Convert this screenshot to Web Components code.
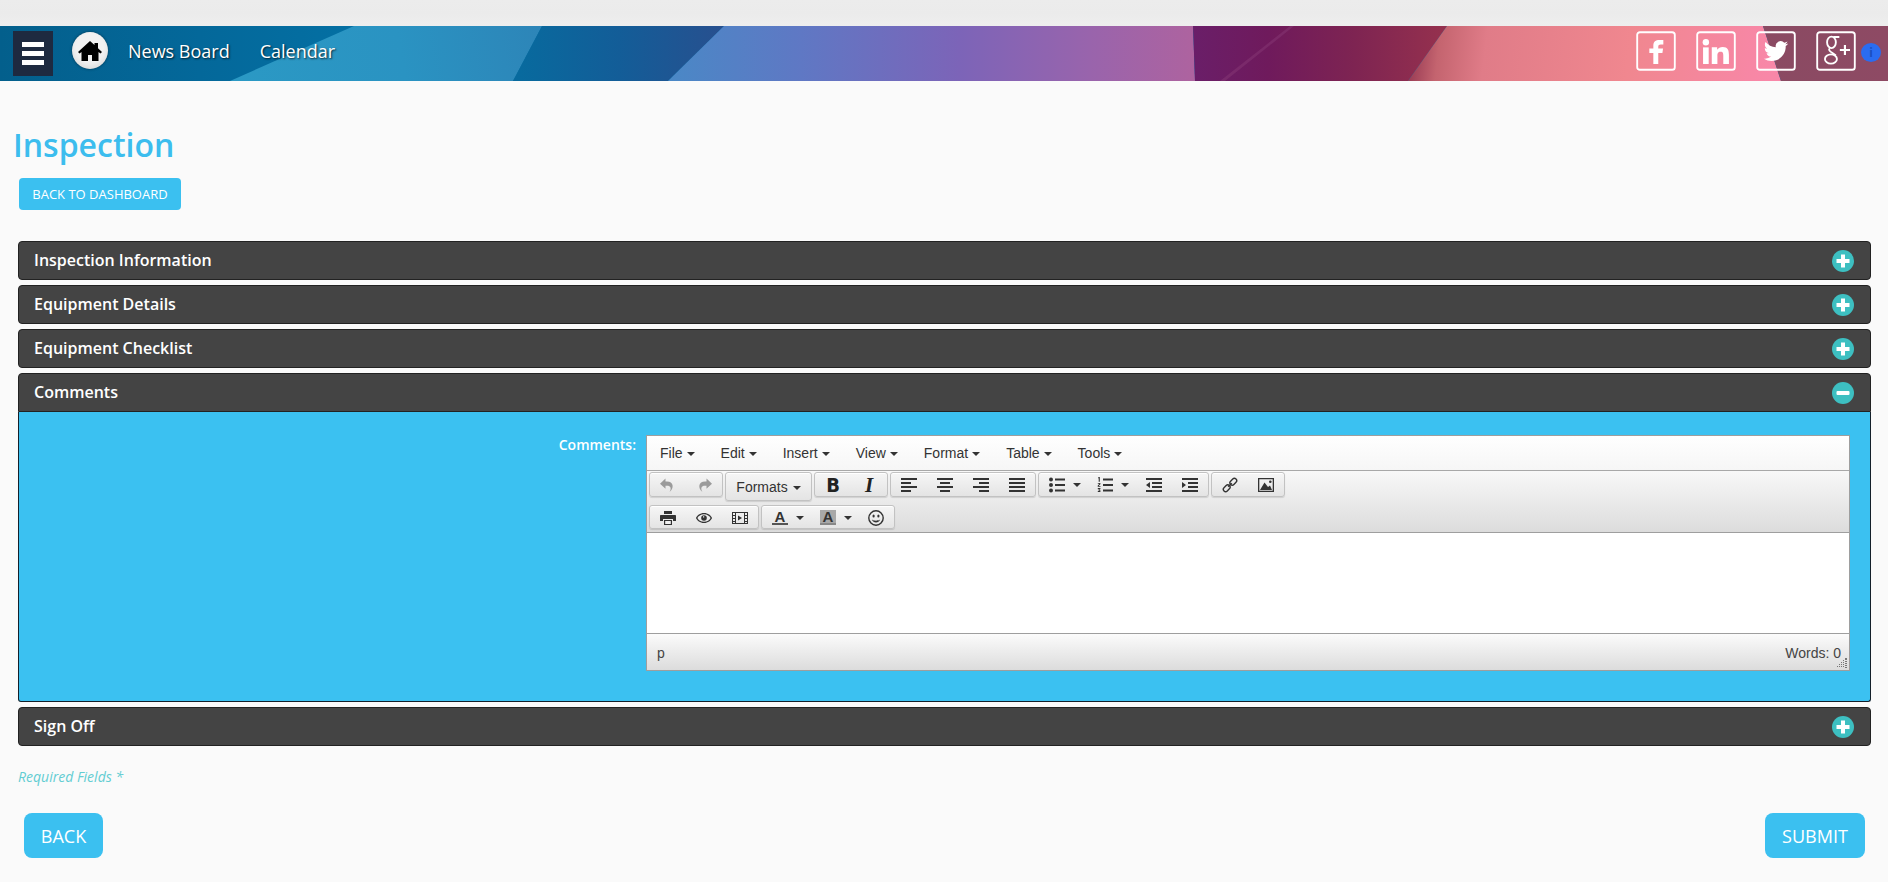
<!DOCTYPE html>
<html lang="en">
<head>
<meta charset="utf-8">
<title>Inspection</title>
<style>
html,body{margin:0;padding:0;background:#fafafa;font-family:"Open Sans",sans-serif;}
</style>
</head>
<body>
<app-shell>
  <site-header></site-header>
  <page-main>
    <page-title slot="title">Inspection</page-title>
    <blue-button slot="title" size="small" class="dash">BACK TO DASHBOARD</blue-button>
    <accordion-panel title="Inspection Information"></accordion-panel>
    <accordion-panel title="Equipment Details"></accordion-panel>
    <accordion-panel title="Equipment Checklist"></accordion-panel>
    <accordion-panel title="Comments" open>
      <comment-field label="Comments:"><rich-editor></rich-editor></comment-field>
    </accordion-panel>
    <accordion-panel title="Sign Off"></accordion-panel>
    <form-footer></form-footer>
  </page-main>
</app-shell>

<script>
function def(name, css, html, init){
  customElements.define(name, class extends HTMLElement{
    constructor(){
      super();
      const r=this.attachShadow({mode:'open'});
      r.innerHTML='<style>'+css+'</style>'+(typeof html==='function'?html(this):html);
    }
    connectedCallback(){ if(init&&!this._i){this._i=1;init(this);} }
  });
}

def('app-shell',`
:host{display:block;background:#fafafa;min-height:882px}
.top{height:26px;background:linear-gradient(#ececec,#ebebeb,#eeeeee)}
`,`<div class="top"></div><slot></slot>`);

const SOC={
 f:`<path fill="#fff" d="M13 24.750V16.500h-3v-3.300h3V11c0-3 1.800-4.250 4.500-4.250h3v3.400h-2c-1.200 0-1.800.5-1.800 1.600v1.450h3.600l-.5 3.300h-3.100v8.250z"/>`,
 in:`<g fill="#fff" transform="translate(2.800 4.600) scale(.96)"><circle cx="4.8" cy="4" r="2.5"/><rect x="2.6" y="8" width="4.4" height="13"/><path d="M9.4 8h4.2v1.900c.8-1.300 2.400-2.200 4.400-2.200 4 0 4.800 2.600 4.800 6.100V21h-4.400v-6.400c0-1.500 0-3.200-2.100-3.200s-2.500 1.600-2.500 3.100V21H9.400z"/></g>`,
 tw:`<path fill="#fff" transform="translate(5.900 5.900) scale(.76)" d="M23.953 4.570a10 10 0 01-2.825.775 4.958 4.958 0 002.163-2.723c-.951.555-2.005.959-3.127 1.184a4.920 4.920 0 00-8.384 4.482C7.690 8.095 4.067 6.130 1.640 3.162a4.822 4.822 0 00-.666 2.475c0 1.710.870 3.213 2.188 4.096a4.904 4.904 0 01-2.228-.616v.060a4.923 4.923 0 003.946 4.827 4.996 4.996 0 01-2.212.085 4.936 4.936 0 004.604 3.417 9.867 9.867 0 01-6.102 2.105c-.390 0-.779-.023-1.170-.067a13.995 13.995 0 007.557 2.209c9.053 0 13.998-7.496 13.998-13.985 0-.210 0-.420-.015-.630A9.935 9.935 0 0024 4.590z"/>`,
 gp:`<g fill="none" stroke="#fff" stroke-width="1.400"><ellipse cx="11.600" cy="8.500" rx="3.300" ry="4.300"/><ellipse cx="11.200" cy="21" rx="4.500" ry="3.500"/><path d="M10.400 12.800c-1.300 1.200-.3 2.300 1.700 3.500 1.600 1 2.300 1.500 2.700 2M13 4.500h4.500"/></g><path fill="#fff" d="M20.900 10.500h1.600v3h3v1.500h-3v3h-1.600v-3h-3v-1.500h3z"/>`
};
def('social-icon',`
:host{display:block;width:40px;height:40px}
svg{display:block;width:40px;height:40px}
`,h=>`<svg viewBox="0 0 30 30"><rect x=".9" y=".9" width="28.200" height="28.200" rx="2" fill="none" stroke="#fff" stroke-width="1.400"/>${SOC[h.getAttribute('kind')]}</svg>`);

def('site-header',`
:host{display:block;position:relative;height:55px;overflow:hidden;background:#035f8e}
.bg{position:absolute;inset:0;width:100%;height:55px;display:block}
.row{position:relative;height:55px;display:flex;align-items:flex-start;padding-left:13px;box-sizing:border-box}
.menu{width:40px;height:45px;margin-top:5px;background:#1e2a40;display:flex;flex-direction:column;justify-content:center;gap:4px;align-items:center}
.menu i{display:block;width:22px;height:5px;background:#fff}
.home{width:36px;height:37px;margin:6px 0 0 19px;border-radius:50%;background:#f1f1f1;box-shadow:0 0 3px rgba(0,0,0,.45),inset 0 -3px 5px rgba(0,0,0,.08);display:flex;align-items:center;justify-content:center}
nav{display:flex;margin:6px 0 0 20px;gap:30px;height:38px;align-items:center}
nav a{color:#fff;font:400 18px/24px "Open Sans",sans-serif;text-shadow:1px 1px 2px rgba(0,0,0,.75)}
.soc{margin-left:auto;display:flex;gap:20px;margin-top:5px;padding-right:32px;align-items:flex-start}
.info{position:absolute;left:1861px;top:17px;width:20px;height:19px;border-radius:50%;background:#2a6cf0;color:#1a4fc0;font:700 12px/19px "Open Sans",sans-serif;text-align:center}
`,`
<svg class="bg" viewBox="0 0 1888 55" preserveAspectRatio="none" aria-hidden="true">
<defs>
<linearGradient id="a" gradientUnits="userSpaceOnUse" x1="0" y1="0" x2="400" y2="0"><stop offset="0" stop-color="#035f8c"/><stop offset=".5" stop-color="#04689a"/><stop offset="1" stop-color="#0472a6"/></linearGradient>
<linearGradient id="b" gradientUnits="userSpaceOnUse" x1="230" y1="55" x2="540" y2="0"><stop offset="0" stop-color="#2b99c4"/><stop offset=".55" stop-color="#2a93c2"/><stop offset="1" stop-color="#2d85b8"/></linearGradient>
<linearGradient id="c" gradientUnits="userSpaceOnUse" x1="520" y1="0" x2="720" y2="0"><stop offset="0" stop-color="#086a9e"/><stop offset=".5" stop-color="#135d98"/><stop offset="1" stop-color="#27508f"/></linearGradient>
<linearGradient id="d" gradientUnits="userSpaceOnUse" x1="670" y1="0" x2="1195" y2="0"><stop offset="0" stop-color="#4a88c6"/><stop offset=".25" stop-color="#5f78c4"/><stop offset=".55" stop-color="#7c64b8"/><stop offset=".8" stop-color="#9964ac"/><stop offset="1" stop-color="#ae639f"/></linearGradient>
<linearGradient id="e" gradientUnits="userSpaceOnUse" x1="1195" y1="0" x2="1440" y2="0"><stop offset="0" stop-color="#6a1e68"/><stop offset=".3" stop-color="#6f1a5c"/><stop offset=".65" stop-color="#7e2452"/><stop offset="1" stop-color="#94304e"/></linearGradient>
<linearGradient id="f" gradientUnits="userSpaceOnUse" x1="1415" y1="8" x2="1770" y2="50"><stop offset="0" stop-color="#9c3e56"/><stop offset=".07" stop-color="#c4646f"/><stop offset=".2" stop-color="#e07c88"/><stop offset=".6" stop-color="#f0878f"/><stop offset="1" stop-color="#f887a8"/></linearGradient>
<linearGradient id="g" gradientUnits="userSpaceOnUse" x1="1760" y1="0" x2="1888" y2="0"><stop offset="0" stop-color="#8a4a62"/><stop offset="1" stop-color="#8e4a64"/></linearGradient>
</defs>
<rect width="1888" height="55" fill="url(#a)"/>
<polygon points="354,0 542,0 513,55 230,55" fill="url(#b)"/>
<polygon points="542,0 724,0 668,55 513,55" fill="url(#c)"/>
<polygon points="724,0 1193,0 1195,55 668,55" fill="url(#d)"/>
<polygon points="1193,0 1447,0 1408,55 1195,55" fill="url(#e)"/>
<polygon points="1290,0 1294,0 1225,55 1220,55" fill="#8a3c78" opacity=".45"/>
<polygon points="1447,0 1763,0 1781,55 1408,55" fill="url(#f)"/>
<polygon points="1763,0 1888,0 1888,55 1781,55" fill="url(#g)"/>
</svg>
<div class="row">
  <div class="menu"><i></i><i></i><i></i></div>
  <div class="home"><svg width="24" height="22" viewBox="0 0 24 22"><path d="M12 1 0 12l1.500 1.600L3.500 12V21h6.500v-6h4v6h6.500V12l2 1.600L24 12l-4-3.700V3h-3.500v2.100z" fill="#000"/></svg></div>
  <nav><a>News Board</a><a>Calendar</a></nav>
  <div class="soc"><social-icon kind="f"></social-icon><social-icon kind="in"></social-icon><social-icon kind="tw"></social-icon><social-icon kind="gp"></social-icon></div>
  <div class="info">i</div>
</div>`);

def('page-main',`
:host{display:block;padding:0 17px 0 18px}
.head{display:flex;flex-direction:column;align-items:flex-start;margin:0 0 31px -5px;padding-top:42px}
`,`<div class="head"><slot name="title"></slot></div><slot></slot>`);

def('page-title',`
:host{display:block;color:#3cbdee;font:600 32px/44px "Open Sans",sans-serif;margin-bottom:11px}
`,`<slot></slot>`);

def('blue-button',`
:host{display:inline-flex;align-items:center;justify-content:center;background:#3bc0f0;color:#fff;font-family:"Open Sans",sans-serif;box-sizing:border-box}
:host([size=small]){height:32px;width:162px;margin-left:6px;border-radius:4px;font-size:13px}
:host([size=big]){height:45px;border-radius:8px;font-size:18px}
`,`<slot></slot>`);

def('accordion-panel',`
:host{display:block;margin-bottom:5px}
.h{height:39px;box-sizing:border-box;background:#444;border:1px solid #222;border-radius:4px;display:flex;align-items:center;justify-content:space-between;padding:0 16px 0 15px;color:#fff;font:600 16px/22px "Open Sans",sans-serif}
.h span{position:relative;top:-1px}
:host([open]) .h{border-radius:4px 4px 0 0}
.b{display:none;background:#3bc1f1;border:1px solid #14202a;border-top:0;border-radius:0 0 3px 3px;padding:23px 20px 30px 0}
:host([open]) .b{display:block}
svg{display:block}
`,h=>{const o=h.hasAttribute('open');return `<div class="h"><span>${h.getAttribute('title')}</span>
<svg width="22" height="22" viewBox="0 0 22 22"><circle cx="11" cy="11" r="11" fill="#3dbfc1"/>${o?'<rect x="4.500" y="9" width="13" height="4" rx="1" fill="#fff"/>':'<path d="M9 4.500h4V9h4.500v4H13v4.500H9V13H4.500V9H9z" fill="#fff"/>'}</svg></div><div class="b"><slot></slot></div>`});

def('comment-field',`
:host{display:grid;grid-template-columns:617px 1fr;column-gap:10px;align-items:start}
label{text-align:right;color:#fff;font:600 14px/19px "Open Sans",sans-serif;padding-top:0}
`,h=>`<label>${h.getAttribute('label')}</label><slot></slot>`);

const ICON={
 undo:`<path d="M9.500 15c2.200-3.500 1.200-6.200-2.500-6.200H5.500v3L0 6.800 5.500 1.500v3H7c6.500 0 7.500 6.500 2.500 10.500z"/>`,
 redo:`<path d="M6.500 15C4.300 11.500 5.300 8.800 9 8.800h1.500v3L16 6.800 10.500 1.500v3H9C2.500 4.500 1.500 11 6.500 15z"/>`,
 l:`<path d="M0 1h16v2H0zM0 5h10v2H0zM0 9h16v2H0zM0 13h10v2H0z"/>`,
 c:`<path d="M0 1h16v2H0zM3 5h10v2H3zM0 9h16v2H0zM3 13h10v2H3z"/>`,
 r:`<path d="M0 1h16v2H0zM6 5h10v2H6zM0 9h16v2H0zM6 13h10v2H6z"/>`,
 j:`<path d="M0 1h16v2H0zM0 5h16v2H0zM0 9h16v2H0zM0 13h16v2H0z"/>`,
 ul:`<circle cx="2" cy="2.500" r="2"/><circle cx="2" cy="8" r="2"/><circle cx="2" cy="13.500" r="2"/><path d="M6 1.500h10v2H6zM6 7h10v2H6zM6 12.500h10v2H6z"/>`,
 ol:`<path d="M6 1.500h10v2H6zM6 7h10v2H6zM6 12.500h10v2H6z"/><path d="M1.500 0h1.300v4.800H1.700V1.200H1zM.8 6h2.600v.9c0 .8-1.500 1.500-1.600 2h1.700v.8H.7V9c0-1 1.600-1.500 1.600-2.200H.8zM.8 11h2.600v1l-.7.7.7.7v1.500H.8v-.8h1.600v-.5h-1v-.8h1v-.5H.8z"/>`,
 out:`<path d="M0 1h16v2H0zM6 5h10v2H6zM6 9h10v2H6zM0 13h16v2H0zM4 5v6L0 8z"/>`,
 ind:`<path d="M0 1h16v2H0zM6 5h10v2H6zM6 9h10v2H6zM0 13h16v2H0zM0 5v6l4-3z"/>`,
 link:`<g fill="none" stroke="currentColor" stroke-width="1.400"><rect x="-3.800" y="-2.300" width="7.600" height="4.600" rx="2.300" transform="translate(4.700 11.300) rotate(-45)"/><rect x="-3.800" y="-2.300" width="7.600" height="4.600" rx="2.300" transform="translate(11.300 4.700) rotate(-45)"/><path d="M6.200 9.800 9.800 6.200"/></g>`,
 img:`<path fill-rule="evenodd" d="M0 1h16v14H0zM1.300 2.300v11.400h13.400V2.300z"/><path d="M2 13 6.500 5.500 10 10l2-1.500 2 4.500z"/><circle cx="12.300" cy="4.800" r="1.300"/>`,
 print:`<path d="M4 1h8v3H4zM1 5h14c.6 0 1 .4 1 1v5h-3V9H3v2H0V6c0-.6.4-1 1-1zM4 10h8v5H4z"/><rect x="5.200" y="11" width="5.600" height="3" fill="#f2f2f2"/>`,
 eye:`<path fill-rule="evenodd" d="M8 3c4 0 7 2.500 8 5-1 2.500-4 5-8 5S1 10.500 0 8c1-2.500 4-5 8-5zm0 1.200C4.800 4.200 2.400 6 1.400 8c1 2 3.400 3.800 6.600 3.800S13.600 10 14.600 8C13.600 6 11.200 4.200 8 4.200z"/><circle cx="8" cy="8" r="2.800"/><path fill="#eee" d="M7 6.200h1.200v1.200H7z"/>`,
 media:`<path fill-rule="evenodd" d="M0 2h16v12H0zM1 3v2h2V3zm0 3v2h2V6zm0 3v2h2V9zm0 3v1h2v-1zM13 3v2h2V3zm0 3v2h2V6zm0 3v2h2V9zm0 3v1h2v-1zM4 3v10h8V3z"/><path d="M6 5.500v5L10 8z"/>`,
 smile:`<circle cx="8" cy="8" r="7.200" fill="none" stroke="currentColor" stroke-width="1.400"/><ellipse cx="5.600" cy="6" rx="1.100" ry="1.500"/><ellipse cx="10.400" cy="6" rx="1.100" ry="1.500"/><path d="M3.800 9.600c.8 2 2.400 3 4.200 3s3.400-1 4.200-3c-1.200.8-2.800 1.200-4.200 1.200s-3-.4-4.200-1.200z"/>`
};
def('tb-icon',`
:host{display:block;width:16px;height:16px;color:#333}
:host([off]){color:#9b9b9b}
svg{display:block;fill:currentColor}
`,h=>`<svg width="16" height="16" viewBox="0 0 16 16">${ICON[h.getAttribute('n')]}</svg>`);

def('tb-btn',`
:host{display:flex;align-items:center;justify-content:flex-start;width:36px;height:100%;padding:1px 0 0 10px;box-sizing:border-box;gap:8px;color:#333}
:host([split]){width:49px}
:host([split=n]){width:48px}
:host([wide]){width:48px}
i{display:block;width:0;height:0;border:4px solid transparent;border-top-color:#333;border-bottom:0}
.none{display:none}
`,h=>`<slot></slot><i class="${(h.hasAttribute('split')||h.hasAttribute('wide'))?'':'none'}"></i>`);

def('tb-group',`
:host{display:flex;height:25px;box-sizing:border-box;border:1px solid #c2c2c2;border-radius:3px;background:linear-gradient(#f6f6f6,#e4e4e4);box-shadow:inset 0 1px 0 #fff,0 1px 1px rgba(0,0,0,.12)}
:host([tall]){height:29px;width:87px;align-items:center;justify-content:center;gap:5px;font:14px "Liberation Sans",Arial,sans-serif;color:#333}
:host([low]){height:24px}
i{display:none}
:host([tall]) i{display:block;width:0;height:0;border:4px solid transparent;border-top-color:#333;border-bottom:0;margin-top:2px}
`,`<slot></slot><i></i>`);

def('tb-row',`
:host{display:flex;align-items:flex-start;gap:2px;padding-left:2px;margin-bottom:4px}
`,`<slot></slot>`);

def('tb-letter',`
:host{display:block;width:16px;height:16px;text-align:center;color:#222}
span{display:block;line-height:16px}
:host([k=b]) span{font:700 20px/16px "DejaVu Sans Condensed","Liberation Sans",sans-serif}
:host([k=i]) span{font:italic 700 21px/16px "Liberation Serif",serif}
:host([k=fc]) span,:host([k=bg]) span{font:700 15px/13px "Liberation Sans",sans-serif;height:13px;border-bottom:2px solid #555;color:#333}
:host([k=bg]) span{background:#a8a8a8;border-bottom-color:#888}
`,h=>`<span>${h.getAttribute('t')}</span>`);

def('menu-item',`
:host{display:flex;align-items:center;gap:4px;padding:0 13px;font:14px/20px "Liberation Sans",Arial,sans-serif;color:#333}
i{display:block;width:0;height:0;border:4px solid transparent;border-top-color:#333;border-bottom:0;margin-left:0;margin-top:1px}
`,`<slot></slot><i></i>`);

def('rich-editor',`
:host{display:block;border:1px solid #9e9e9e;box-sizing:border-box;height:236px;background:#fff;display:flex;flex-direction:column}
.menubar{height:35px;box-sizing:border-box;display:flex;align-items:center;background:linear-gradient(#fff,#f6f6f6);border-bottom:1px solid #a8a8a8}
.tools{height:62px;box-sizing:border-box;padding-top:1px;background:linear-gradient(#f8f8f8,#dcdcdc);border-bottom:1px solid #9e9e9e}
.area{flex:1;background:#fff;border-bottom:1px solid #9e9e9e}
.status{height:36px;box-sizing:border-box;display:flex;justify-content:space-between;align-items:center;padding:2px 8px 0 10px;background:linear-gradient(#fbfbfb,#dcdcdc);font:14px "Liberation Sans",Arial,sans-serif;color:#444;position:relative}
.grip{position:absolute;right:2px;bottom:2px;width:10px;height:10px}
`,`
<div class="menubar">
 <menu-item>File</menu-item><menu-item>Edit</menu-item><menu-item>Insert</menu-item><menu-item>View</menu-item><menu-item>Format</menu-item><menu-item>Table</menu-item><menu-item>Tools</menu-item>
</div>
<div class="tools">
 <tb-row>
  <tb-group><tb-btn><tb-icon n="undo" off></tb-icon></tb-btn><tb-btn><tb-icon n="redo" off></tb-icon></tb-btn></tb-group>
  <tb-group tall>Formats</tb-group>
  <tb-group><tb-btn><tb-letter k="b" t="B"></tb-letter></tb-btn><tb-btn><tb-letter k="i" t="I"></tb-letter></tb-btn></tb-group>
  <tb-group><tb-btn><tb-icon n="l"></tb-icon></tb-btn><tb-btn><tb-icon n="c"></tb-icon></tb-btn><tb-btn><tb-icon n="r"></tb-icon></tb-btn><tb-btn><tb-icon n="j"></tb-icon></tb-btn></tb-group>
  <tb-group><tb-btn split="n"><tb-icon n="ul"></tb-icon></tb-btn><tb-btn split><tb-icon n="ol"></tb-icon></tb-btn><tb-btn><tb-icon n="out"></tb-icon></tb-btn><tb-btn><tb-icon n="ind"></tb-icon></tb-btn></tb-group>
  <tb-group><tb-btn><tb-icon n="link"></tb-icon></tb-btn><tb-btn><tb-icon n="img"></tb-icon></tb-btn></tb-group>
 </tb-row>
 <tb-row>
  <tb-group low><tb-btn><tb-icon n="print"></tb-icon></tb-btn><tb-btn><tb-icon n="eye"></tb-icon></tb-btn><tb-btn><tb-icon n="media"></tb-icon></tb-btn></tb-group>
  <tb-group low><tb-btn wide><tb-letter k="fc" t="A"></tb-letter></tb-btn><tb-btn wide><tb-letter k="bg" t="A"></tb-letter></tb-btn><tb-btn><tb-icon n="smile"></tb-icon></tb-btn></tb-group>
 </tb-row>
</div>
<div class="area"></div>
<div class="status"><span>p</span><span>Words: 0</span>
<svg class="grip" viewBox="0 0 10 10" fill="#777"><path d="M8 0h2v2H8zM6 2h1v1H6zM8 3h2v1H8zM4 4h1v1H4zM6 4h1v1H6zM8 5h2v1H8zM2 6h1v1H2zM4 6h1v1H4zM6 6h1v1H6zM8 7h2v1H8zM0 8h1v1H0zM2 8h1v1H2zM4 8h1v1H4zM6 8h1v1H6zM8 9h2v1H8z"/></svg></div>`);

def('form-footer',`
:host{display:block;padding-top:16px}
.req{font:italic 400 14px/20px "Open Sans",sans-serif;color:#62cdd2}
.btns{display:flex;justify-content:space-between;margin-top:26px;padding:0 6px 0 6px}
`,`<div class="req">Required Fields *</div>
<div class="btns"><blue-button size="big" style="width:79px">BACK</blue-button><blue-button size="big" style="width:100px">SUBMIT</blue-button></div>`);
</script>
</body>
</html>
